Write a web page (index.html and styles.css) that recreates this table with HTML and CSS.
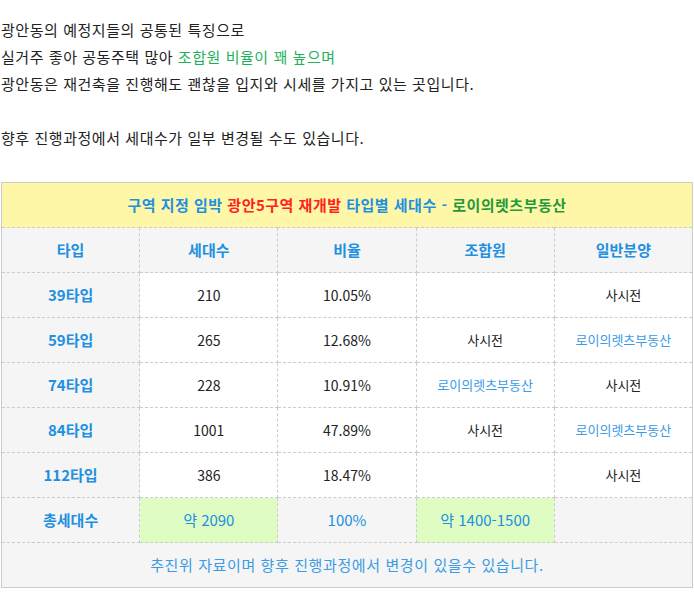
FILE: index.html
```html
<!DOCTYPE html>
<html lang="ko">
<head>
<meta charset="utf-8">
<link rel="stylesheet" href="styles.css">
</head>
<body>
<div class="intro">
  <p>광안동의 예정지들의 공통된 특징으로</p>
  <p>실거주 좋아 공동주택 많아 <span class="green">조합원 비율이 꽤 높으며</span></p>
  <p>광안동은 재건축을 진행해도 괜찮을 입지와 시세를 가지고 있는 곳입니다.</p>
  <p>&nbsp;</p>
  <p>향후 진행과정에서 세대수가 일부 변경될 수도 있습니다.</p>
</div>
<table class="tbl">
  <tr>
    <td colspan="5" class="title">구역 지정 임박 <span class="red">광안5구역 재개발</span> 타입별 세대수 - <span class="dgreen">로이의렛츠부동산</span></td>
  </tr>
  <tr class="head">
    <td>타입</td><td>세대수</td><td>비율</td><td>조합원</td><td>일반분양</td>
  </tr>
  <tr>
    <td class="type">39타입</td><td class="num">210</td><td class="num">10.05%</td><td></td><td class="txt">사시전</td>
  </tr>
  <tr>
    <td class="type">59타입</td><td class="num">265</td><td class="num">12.68%</td><td class="txt">사시전</td><td class="link">로이의렛츠부동산</td>
  </tr>
  <tr>
    <td class="type">74타입</td><td class="num">228</td><td class="num">10.91%</td><td class="link">로이의렛츠부동산</td><td class="txt">사시전</td>
  </tr>
  <tr>
    <td class="type">84타입</td><td class="num">1001</td><td class="num">47.89%</td><td class="txt">사시전</td><td class="link">로이의렛츠부동산</td>
  </tr>
  <tr>
    <td class="type">112타입</td><td class="num">386</td><td class="num">18.47%</td><td></td><td class="txt">사시전</td>
  </tr>
  <tr class="total">
    <td class="type">총세대수</td><td class="hl">약 2090</td><td>100%</td><td class="hl">약 1400-1500</td><td></td>
  </tr>
  <tr>
    <td colspan="5" class="foot">추진위 자료이며 향후 진행과정에서 변경이 있을수 있습니다.</td>
  </tr>
</table>
</body>
</html>
```
FILE: styles.css
```css
html, body {
  margin: 0;
  padding: 0;
  background: #fff;
}
body {
  padding: 0 1px;
  font-family: "Noto Sans CJK KR", "Noto Sans", sans-serif;
  color: #222;
}
.intro {
  padding-top: 16px;
  margin-bottom: 31px;
}
.intro p {
  margin: 0;
  font-size: 15px;
  line-height: 27px;
  color: #222;
  letter-spacing: 0.55px;
}
.green {
  color: #1fb15a;
}
.tbl {
  width: 100%;
  border-collapse: collapse;
  table-layout: fixed;
  border: 1px solid #cccccc;
}
.tbl td {
  border: 1px dashed #cccccc;
  height: 44px;
  padding: 0;
  text-align: center;
  vertical-align: middle;
  font-size: 14px;
  line-height: 20px;
}
.tbl td.title {
  background: #fff7a8;
  color: #2190e0;
  font-weight: bold;
  font-size: 15px;
  letter-spacing: 0.5px;
  border: 1px solid #cccccc;
  border-bottom: 1px dashed #cccccc;
}
.red {
  color: #ff2222;
}
.dgreen {
  color: #1f9a3a;
}
.head td {
  background: #f5f5f5;
  color: #2190e0;
  font-weight: bold;
  font-size: 15px;
}
.tbl td.type {
  background: #f5f5f5;
  color: #2190e0;
  font-weight: bold;
  font-size: 15px;
}
.tbl td.num {
  color: #222;
  font-size: 14px;
}
.tbl td.txt {
  color: #222;
  font-size: 13px;
}
.tbl td.link {
  color: #3a9be6;
  font-size: 13px;
}
.total td {
  background: #f5f5f5;
  color: #2190e0;
  font-size: 15px;
}
.total td.hl {
  background: #dffcc2;
}
.tbl td.foot {
  background: #f5f5f5;
  color: #3a9be6;
  font-size: 15px;
  letter-spacing: 0.6px;
  border-top: 1px dashed #cccccc;
}
```
